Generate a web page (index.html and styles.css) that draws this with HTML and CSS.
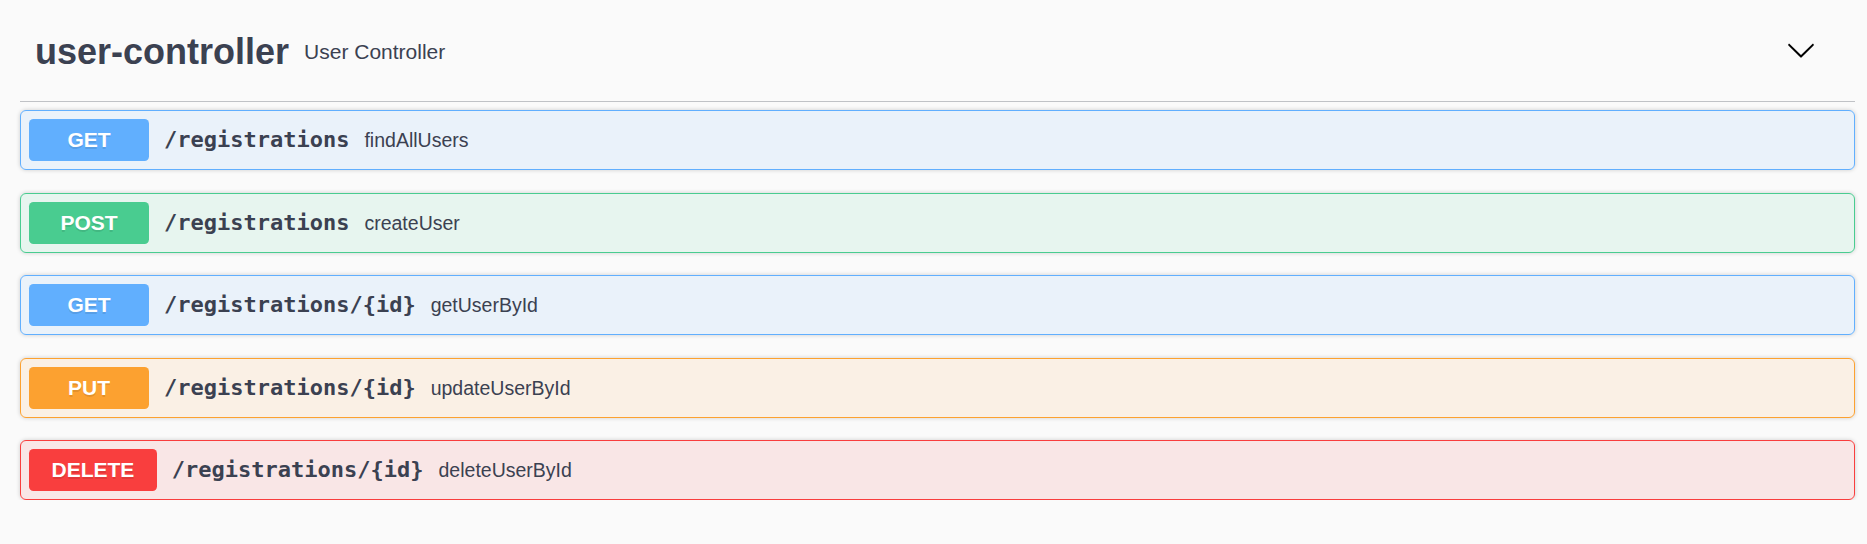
FILE: index.html
```html
<!DOCTYPE html>
<html lang="en">
<head>
<meta charset="utf-8">
<title>user-controller</title>
<link rel="stylesheet" href="styles.css">
</head>
<body>
<div class="wrapper">
  <section class="tag-section">
    <h4 class="opblock-tag">
      <span class="tag-name">user-controller</span>
      <small class="tag-desc">User Controller</small>
      <span class="spacer"></span>
      <button class="expand-operation" aria-label="collapse">
        <svg class="arrow" width="30" height="30" viewBox="0 0 20 20" aria-hidden="true">
          <path d="M17.418 6.109c.272-.268.709-.268.979 0s.271.701 0 .969l-7.908 7.83c-.27.268-.707.268-.979 0l-7.908-7.83c-.27-.268-.27-.701 0-.969.271-.268.709-.268.979 0L10 13.25l7.418-7.141z"/>
        </svg>
      </button>
    </h4>
    <div class="operations">
      <div class="opblock opblock-get">
        <span class="method">GET</span>
        <span class="path">/registrations</span>
        <span class="desc">findAllUsers</span>
      </div>
      <div class="opblock opblock-post">
        <span class="method">POST</span>
        <span class="path">/registrations</span>
        <span class="desc">createUser</span>
      </div>
      <div class="opblock opblock-get">
        <span class="method">GET</span>
        <span class="path">/registrations/{id}</span>
        <span class="desc">getUserById</span>
      </div>
      <div class="opblock opblock-put">
        <span class="method">PUT</span>
        <span class="path">/registrations/{id}</span>
        <span class="desc">updateUserById</span>
      </div>
      <div class="opblock opblock-delete">
        <span class="method">DELETE</span>
        <span class="path">/registrations/{id}</span>
        <span class="desc">deleteUserById</span>
      </div>
    </div>
  </section>
</div>
</body>
</html>
```

FILE: styles.css
```css
html, body {
  margin: 0;
  padding: 0;
  background: #fafafa;
}

body {
  font-family: "Liberation Sans", Arial, sans-serif;
  color: #3b4151;
}

.wrapper {
  width: 1835px;
  margin-left: 20px;
}

.opblock-tag {
  display: flex;
  align-items: center;
  box-sizing: border-box;
  height: 102px;
  margin: 0 0 8px;
  padding: 3px 39px 0 15px;
  border-bottom: 1px solid rgba(59, 65, 81, 0.3);
  font-family: "Liberation Sans", Arial, sans-serif;
  font-size: 36px;
  font-weight: 700;
  color: #3b4151;
}

.tag-name {
  line-height: normal;
}

.tag-desc {
  padding: 0 15px;
  font-size: 21px;
  font-weight: 400;
  color: #3b4151;
}

.spacer {
  flex: 1;
}

.expand-operation {
  border: none;
  background: none;
  padding: 0;
  margin: 0 0 5px;
  display: flex;
  cursor: pointer;
}

.arrow {
  display: block;
  fill: #000;
}

.operations {
  display: flex;
  flex-direction: column;
  gap: 22.5px;
}

.opblock {
  display: flex;
  align-items: baseline;
  height: 60px;
  box-sizing: border-box;
  padding: 8px;
  border: 1px solid #000;
  border-radius: 6px;
  box-shadow: 0 0 4.5px rgba(0, 0, 0, 0.19);
}

.method {
  box-sizing: border-box;
  min-width: 120px;
  padding: 9px 22.5px;
  border-radius: 4.5px;
  font-family: "Liberation Sans", Arial, sans-serif;
  font-size: 21px;
  font-weight: 700;
  color: #fff;
  text-align: center;
  text-shadow: 0 1.5px 0 rgba(0, 0, 0, 0.1);
}

.path {
  padding: 0 15px;
  font-family: "DejaVu Sans Mono", "Liberation Mono", monospace;
  font-size: 22px;
  font-weight: 700;
  color: #3b4151;
}

.desc {
  font-family: "Liberation Sans", Arial, sans-serif;
  font-size: 19.5px;
  color: #3b4151;
}

.opblock-get {
  background: rgba(97, 175, 254, 0.1);
  border-color: #61affe;
}
.opblock-get .method { background: #61affe; }

.opblock-post {
  background: rgba(73, 204, 144, 0.1);
  border-color: #49cc90;
}
.opblock-post .method { background: #49cc90; }

.opblock-put {
  background: rgba(252, 161, 48, 0.1);
  border-color: #fca130;
}
.opblock-put .method { background: #fca130; }

.opblock-delete {
  background: rgba(249, 62, 62, 0.1);
  border-color: #f93e3e;
}
.opblock-delete .method { background: #f93e3e; }
```
